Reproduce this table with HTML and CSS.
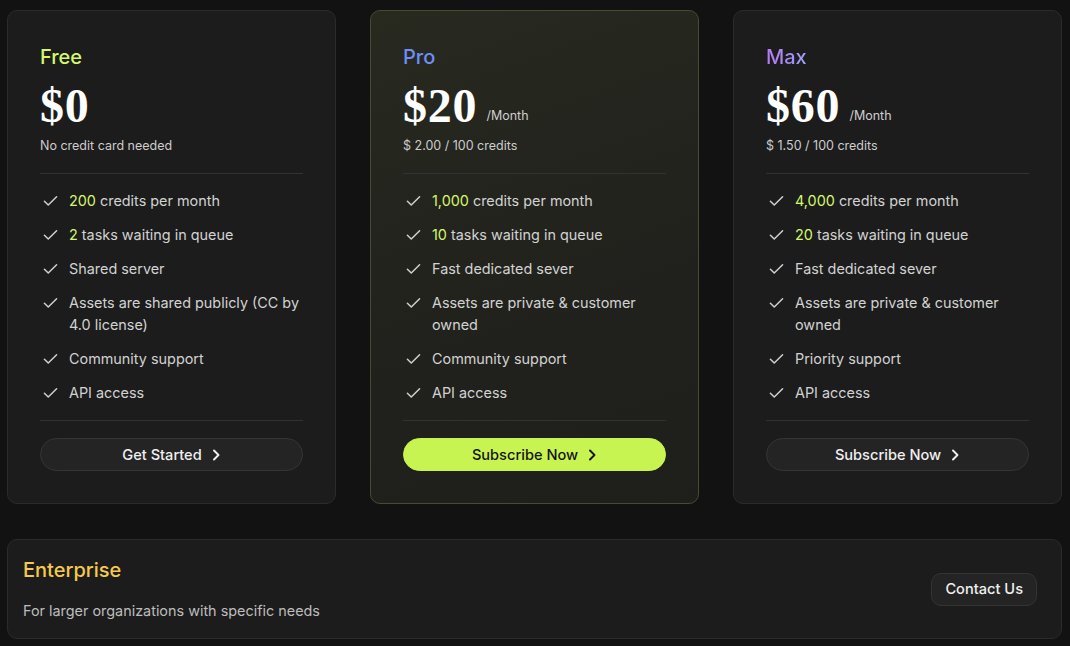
FILE: index.html
```html
<!DOCTYPE html>
<html lang="en">
<head>
<meta charset="utf-8">
<title>Pricing</title>
<link rel="stylesheet" href="styles.css">
</head>
<body>
<main class="page">
  <section class="plans">
    <article class="plan">
      <h2 class="plan-name name-free">Free</h2>
      <div class="price-row"><span class="price">$0</span></div>
      <p class="price-note">No credit card needed</p>
      <hr class="divider">
      <ul class="features">
        <li><svg class="check" viewBox="0 0 16 12"><path d="M1.5 6.2 5.6 10.2 14.5 1.5"/></svg><span><em>200</em> credits per month</span></li>
        <li><svg class="check" viewBox="0 0 16 12"><path d="M1.5 6.2 5.6 10.2 14.5 1.5"/></svg><span><em>2</em> tasks waiting in queue</span></li>
        <li><svg class="check" viewBox="0 0 16 12"><path d="M1.5 6.2 5.6 10.2 14.5 1.5"/></svg><span>Shared server</span></li>
        <li><svg class="check" viewBox="0 0 16 12"><path d="M1.5 6.2 5.6 10.2 14.5 1.5"/></svg><span>Assets are shared publicly (CC by 4.0 license)</span></li>
        <li><svg class="check" viewBox="0 0 16 12"><path d="M1.5 6.2 5.6 10.2 14.5 1.5"/></svg><span>Community support</span></li>
        <li><svg class="check" viewBox="0 0 16 12"><path d="M1.5 6.2 5.6 10.2 14.5 1.5"/></svg><span>API access</span></li>
      </ul>
      <hr class="divider divider-bottom">
      <button class="btn">Get Started <svg class="chev" viewBox="0 0 10 14"><path d="M3 2.5 7.5 7 3 11.5"/></svg></button>
    </article>

    <article class="plan plan-pro">
      <h2 class="plan-name name-pro">Pro</h2>
      <div class="price-row"><span class="price">$20</span><span class="per">/Month</span></div>
      <p class="price-note">$ 2.00 / 100 credits</p>
      <hr class="divider">
      <ul class="features">
        <li><svg class="check" viewBox="0 0 16 12"><path d="M1.5 6.2 5.6 10.2 14.5 1.5"/></svg><span><em>1,000</em> credits per month</span></li>
        <li><svg class="check" viewBox="0 0 16 12"><path d="M1.5 6.2 5.6 10.2 14.5 1.5"/></svg><span><em>10</em> tasks waiting in queue</span></li>
        <li><svg class="check" viewBox="0 0 16 12"><path d="M1.5 6.2 5.6 10.2 14.5 1.5"/></svg><span>Fast dedicated sever</span></li>
        <li><svg class="check" viewBox="0 0 16 12"><path d="M1.5 6.2 5.6 10.2 14.5 1.5"/></svg><span>Assets are private &amp; customer owned</span></li>
        <li><svg class="check" viewBox="0 0 16 12"><path d="M1.5 6.2 5.6 10.2 14.5 1.5"/></svg><span>Community support</span></li>
        <li><svg class="check" viewBox="0 0 16 12"><path d="M1.5 6.2 5.6 10.2 14.5 1.5"/></svg><span>API access</span></li>
      </ul>
      <hr class="divider divider-bottom">
      <button class="btn btn-primary">Subscribe Now <svg class="chev" viewBox="0 0 10 14"><path d="M3 2.5 7.5 7 3 11.5"/></svg></button>
    </article>

    <article class="plan">
      <h2 class="plan-name name-max">Max</h2>
      <div class="price-row"><span class="price">$60</span><span class="per">/Month</span></div>
      <p class="price-note">$ 1.50 / 100 credits</p>
      <hr class="divider">
      <ul class="features">
        <li><svg class="check" viewBox="0 0 16 12"><path d="M1.5 6.2 5.6 10.2 14.5 1.5"/></svg><span><em>4,000</em> credits per month</span></li>
        <li><svg class="check" viewBox="0 0 16 12"><path d="M1.5 6.2 5.6 10.2 14.5 1.5"/></svg><span><em>20</em> tasks waiting in queue</span></li>
        <li><svg class="check" viewBox="0 0 16 12"><path d="M1.5 6.2 5.6 10.2 14.5 1.5"/></svg><span>Fast dedicated sever</span></li>
        <li><svg class="check" viewBox="0 0 16 12"><path d="M1.5 6.2 5.6 10.2 14.5 1.5"/></svg><span>Assets are private &amp; customer owned</span></li>
        <li><svg class="check" viewBox="0 0 16 12"><path d="M1.5 6.2 5.6 10.2 14.5 1.5"/></svg><span>Priority support</span></li>
        <li><svg class="check" viewBox="0 0 16 12"><path d="M1.5 6.2 5.6 10.2 14.5 1.5"/></svg><span>API access</span></li>
      </ul>
      <hr class="divider divider-bottom">
      <button class="btn">Subscribe Now <svg class="chev" viewBox="0 0 10 14"><path d="M3 2.5 7.5 7 3 11.5"/></svg></button>
    </article>
  </section>

  <section class="enterprise">
    <div class="ent-text">
      <h2 class="plan-name name-ent">Enterprise</h2>
      <p class="ent-desc">For larger organizations with specific needs</p>
    </div>
    <button class="contact">Contact Us</button>
  </section>
</main>
</body>
</html>
```

FILE: styles.css
```css
* { box-sizing: border-box; }

html, body {
  margin: 0;
  background: #121212;
  color: #e6e6e6;
  font-family: Inter, "Noto Sans", "Liberation Sans", sans-serif;
}

.page {
  width: 1070px;
  padding: 10px 8px 0 7px;
}

.plans {
  display: grid;
  grid-template-columns: repeat(3, 329px);
  column-gap: 34px;
}

.plan {
  display: flex;
  flex-direction: column;
  height: 494px;
  padding: 32px 32px 0 32px;
  background: #1c1c1c;
  border: 1px solid #2b2b2b;
  border-radius: 10px;
}

.plan-pro {
  background: linear-gradient(160deg, #28291f 0%, #22231d 45%, #1e1e1b 100%);
  border-color: #4a4a30;
}

.plan-name {
  margin: 0;
  font-size: 20px;
  line-height: 28px;
  font-weight: 500;
}

.name-free { color: #d6f86b; }
.name-pro { color: #6e8ff7; }
.name-max {
  background: linear-gradient(90deg, #b879f4 0%, #a58ff6 60%, #9ea6f6 100%);
  -webkit-background-clip: text;
  background-clip: text;
  color: transparent;
  align-self: flex-start;
}
.name-ent { color: #f6c94f; }

.price-row {
  display: flex;
  align-items: baseline;
  margin-top: 9px;
  height: 52px;
}

.price {
  font-family: "Liberation Serif", "DejaVu Serif", serif;
  font-weight: 700;
  font-size: 48px;
  line-height: 52px;
  color: #ffffff;
  letter-spacing: 0.8px;
}

.per {
  margin-left: 9px;
  font-size: 12.5px;
  color: #cfcfcf;
  position: relative;
  top: -2px;
}

.price-note {
  margin: 5px 0 0;
  font-size: 12.5px;
  line-height: 18px;
  color: #cdcdcd;
}

.divider {
  margin: 18px 0 0;
  border: 0;
  height: 1px;
  background: #323232;
}

.divider-bottom {
  margin-top: 0;
}

.features {
  list-style: none;
  margin: 16px 0 16px;
  padding: 0;
  display: flex;
  flex-direction: column;
  gap: 12px;
}

.features li {
  display: flex;
  align-items: flex-start;
  gap: 11px;
  font-size: 14.4px;
  line-height: 22px;
  color: #d2d2d2;
}

.features em {
  font-style: normal;
  color: #d6f86b;
}

.check {
  flex: none;
  width: 15px;
  height: 12px;
  margin: 5px 0 0 3px;
  fill: none;
  stroke: #d0d0d0;
  stroke-width: 1.6;
  stroke-linecap: round;
  stroke-linejoin: round;
}

.btn {
  margin-top: 17px;
  height: 33px;
  width: 100%;
  display: flex;
  align-items: center;
  justify-content: center;
  gap: 9px;
  border-radius: 17px;
  background: #242424;
  border: 1px solid #353535;
  color: #f0f0f0;
  font-family: inherit;
  font-size: 14.6px;
  font-weight: 500;
  padding: 0;
}

.btn-primary {
  background: #c8f452;
  border-color: #c8f452;
  color: #151515;
}

.chev {
  width: 10px;
  height: 14px;
  fill: none;
  stroke: currentColor;
  stroke-width: 1.9;
  stroke-linecap: round;
  stroke-linejoin: round;
}

.enterprise {
  margin-top: 35px;
  height: 100px;
  display: flex;
  align-items: center;
  justify-content: space-between;
  padding: 0 24px 0 15px;
  background: #1c1c1c;
  border: 1px solid #2b2b2b;
  border-radius: 10px;
}

.ent-desc {
  margin: 16px 0 0;
  font-size: 14.4px;
  line-height: 22px;
  color: #bdbdbd;
}

.contact {
  height: 33px;
  padding: 0 13px;
  border-radius: 10px;
  background: #242424;
  border: 1px solid #343434;
  color: #f0f0f0;
  font-family: inherit;
  font-size: 14.6px;
  font-weight: 500;
}
```
